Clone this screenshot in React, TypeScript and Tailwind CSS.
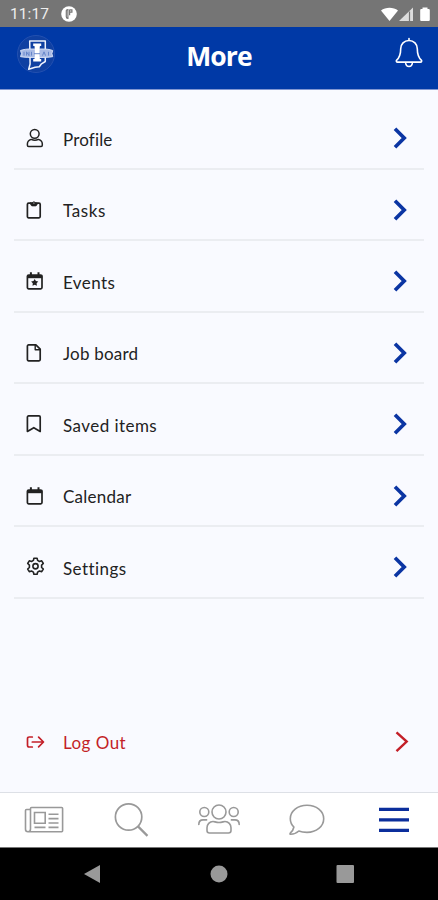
import React from 'react';

interface MenuItem {
  label: string;
  icon: React.ReactNode;
  textClass: string;
}

interface IconProps {
  children: React.ReactNode;
}

const MenuIcon: React.FC<IconProps> = ({ children }) => (
  <svg
    viewBox="0 0 20 20"
    className="w-5 h-5 shrink-0"
    fill="none"
    stroke="currentColor"
    strokeWidth={1.7}
    strokeLinejoin="round"
    strokeLinecap="round"
  >
    {children}
  </svg>
);

const ProfileIcon = () => (
  <MenuIcon>
    <circle cx="9.7" cy="5.8" r="4.4" strokeWidth={1.5} />
    <path d="M6.2 11.4C3.8 12.2 2.4 14 2.4 16v1.2c0 .8.4 1.2 1.2 1.2h12.5c.8 0 1.2-.4 1.2-1.2V16c0-2-1.4-3.8-3.8-4.6-2.2 1.1-5.1 1.1-7.3 0Z" strokeWidth={1.5} />
  </MenuIcon>
);

const TasksIcon = () => (
  <MenuIcon>
    <rect x="2.4" y="3.2" width="12.8" height="14.6" rx="1.2" />
    <path d="M5.500 3h1.800a1.700 1.700 0 0 1 3.200 0h1.800c0 1.700-.6 2.900-1.800 2.900H7.300c-1.200 0-1.800-1.200-1.800-2.900Z" fill="currentColor" strokeWidth={0.8} />
    <circle cx="8.9" cy="3" r=".6" fill="#f9faff" stroke="none" />
  </MenuIcon>
);

const CalendarIcon = ({ starred = false }: { starred?: boolean }) => (
  <MenuIcon>
    <rect x="2.4" y="4" width="14.6" height="13.8" rx="1.3" />
    <path d="M2.2 4h15v3.2h-15Z" fill="currentColor" stroke="none" />
    <path d="M5.900 1.200v3M13.500 1.200v3" strokeWidth={2} strokeLinecap="butt" />
    {starred && (
      <path d="m9.700 8.100 1.200 2 2.400.5-1.700 1.700.3 2.500-2.200-1-2.200 1 .3-2.500-1.700-1.700 2.400-.5Z" fill="currentColor" stroke="none" />
    )}
  </MenuIcon>
);

const FileIcon = () => (
  <MenuIcon>
    <path d="M3.600 1.900h7.300l4.300 4.300v10.400c0 .7-.5 1.200-1.200 1.200H3.600c-.7 0-1.200-.5-1.200-1.200V3.100c0-.7.500-1.200 1.200-1.200Z" />
    <path d="M10.200 2.200v4.600h4.700" strokeWidth={1.4} />
  </MenuIcon>
);

const BookmarkIcon = () => (
  <MenuIcon>
    <path d="M2.400 17.400V3.100c0-.7.500-1.200 1.200-1.200H14c.7 0 1.200.5 1.200 1.200v14.300l-6.400-3.700Z" />
  </MenuIcon>
);

const SettingsIcon = () => (
  <MenuIcon>
    <path d="M8.900 1.200h3.200l.5 2.200 1.900 1.100 2.200-.7 1.600 2.700-1.700 1.600v2.300l1.700 1.600-1.600 2.700-2.200-.7-1.900 1.100-.5 2.200H8.900l-.5-2.200L6.500 14l-2.200.7L2.700 12l1.700-1.600V8.100L2.700 6.500l1.600-2.700 2.200.7 1.900-1.100Z" strokeWidth={1.6} />
    <circle cx="10.5" cy="9.25" r="2.6" strokeWidth={1.6} />
  </MenuIcon>
);

const LogOutIcon = () => (
  <MenuIcon>
    <path d="M7.300 5H4.200c-1 0-1.700.7-1.700 1.700v6.600c0 1 .7 1.700 1.700 1.700h3.100" />
    <path d="M7.300 10h11M13.600 5.200l4.900 4.800-4.900 4.800" />
  </MenuIcon>
);

const menuItems: MenuItem[] = [
  { label: 'Profile', icon: <ProfileIcon />, textClass: 'tracking-[0.15px]' },
  { label: 'Tasks', icon: <TasksIcon />, textClass: 'tracking-[0.6px]' },
  { label: 'Events', icon: <CalendarIcon starred />, textClass: 'tracking-[0.4px]' },
  { label: 'Job board', icon: <FileIcon />, textClass: 'tracking-[0.2px]' },
  { label: 'Saved items', icon: <BookmarkIcon />, textClass: 'tracking-[0.45px]' },
  { label: 'Calendar', icon: <CalendarIcon />, textClass: 'tracking-[0.25px]' },
  { label: 'Settings', icon: <SettingsIcon />, textClass: 'tracking-[0.45px]' },
];

const StatusBar = () => (
  <div className="h-[27px] shrink-0 bg-[#757575] flex items-center pl-[10px] pr-[7px] text-white">
    <span className="font-[Roboto] text-[15.5px] leading-none tracking-[0.1px] text-[#eeeeee] mt-[2px]">11:17</span>
    <svg viewBox="0 0 16 16" className="w-4 h-4 ml-[12px] mt-[1px]">
      <circle cx="8" cy="8" r="7.8" fill="#fff" />
      <path d="M5.300 4.500v6.200c0 1 .7 1.600 1.600 1.600V3.600c-.9 0-1.600.3-1.600.9ZM8.600 3.600v5.600M8.800 3.900h2.100v2.300H8.800" fill="none" stroke="#757575" strokeWidth="1.2" />
    </svg>
    <svg viewBox="0 0 50 18" className="w-[50px] h-[18px] ml-auto mt-[2px]" fill="#fff">
      <path d="M0 4.500C4.500.9 12.500.9 17 4.500L8.500 15Z" />
      <path d="M18 15 32 1.500V15Z" fill="#ddd" />
      <path d="M28.500 5.500v9.500" stroke="#757575" strokeWidth="1.2" />
      <path d="M41.500 3V1.500h5V3h1c.8 0 1.300.5 1.300 1.300v9.400c0 .8-.5 1.300-1.300 1.300h-7c-.8 0-1.300-.5-1.300-1.300V4.300c0-.8.500-1.300 1.300-1.300Z" />
    </svg>
  </div>
);

const Logo = () => (
  <svg viewBox="0 0 40 40" className="w-10 h-10" fill="none">
    <circle cx="20" cy="20" r="18.5" fill="#0f40a2" stroke="#2350b0" strokeWidth="1" />
    <path d="M13.700 7h15.600v20.500l-3.800 2.300-2.200 3-4.200.5-6.400 2 1.400-5.300Z" stroke="#eef2fd" strokeWidth="1.5" strokeLinejoin="round" />
    <path d="M4.500 16.500c3-1.200 7.500-1.500 9.200-1.500h14c2 0 6 .3 9 1.500l-.8 3.100.8 3.100c-8 1.200-24.500 1.200-32.200 0l1-3.100Z" fill="#a9bbe5" stroke="#dde5f8" strokeWidth=".9" />
    <path d="M17.200 9.500h8v2.500h-1.300c-.6 4.500-.6 10 0 13h1.300v2.500h-8V25h1.300c.6-3 .6-8.500 0-13h-1.300Z" fill="#fff" />
    <path d="M8 17.800v3.800M10.500 21.600v-3.800l2.500 3.800v-3.800M15.500 17.800v3.800M26.500 21.600l1.500-3.800 1.500 3.800M32.500 17.800v3.800M18 19.700h6" stroke="#5f80c6" strokeWidth=".9" />
  </svg>
);

const Header = () => (
  <header className="h-[63px] shrink-0 bg-[#0039a6] border-b border-[#8297d2] grid grid-cols-3 items-center">
    <div className="pl-4 -mt-[9px]">
      <Logo />
    </div>
    <h1 className="text-center text-white font-bold text-[26.5px] leading-none tracking-[-0.9px] -mt-[3px] font-['Open_Sans',sans-serif]">More</h1>
    <svg viewBox="0 0 28 32" className="w-7 h-8 justify-self-end mr-[15px] -mt-[11px]" fill="none" stroke="#fff" strokeWidth="1.6" strokeLinecap="round" strokeLinejoin="round">
      <path d="M14 1.500v2M14 3.500c-4.800 0-8.300 3.500-8.300 8.300 0 6.200-1 8.700-4 11.300-.8.800-.3 2 .8 2h23c1.100 0 1.600-1.200.8-2-3-2.600-4-5.100-4-11.300 0-4.800-3.500-8.300-8.300-8.300Z" />
      <path d="M10.700 26.500c.3 2 1.500 3 3.300 3s3-1 3.300-3" />
    </svg>
  </header>
);

const MenuRow: React.FC<{ item: MenuItem }> = ({ item }) => (
  <li className="h-[71.5px] pt-[11px] pl-[11px] pr-[17px] border-b-2 border-[#ebedf1] flex items-center text-[#222]">
    {item.icon}
    <span className={`ml-[18px] mt-[3px] text-[17px] leading-6 ${item.textClass}`}>{item.label}</span>
    <svg viewBox="0 0 14 22" className="w-[14px] h-[22px] ml-auto" fill="none" stroke="#0b35a3" strokeWidth="3.7">
      <path d="m2 1.800 9.200 9.200L2 20.200" />
    </svg>
  </li>
);

const TabBar = () => (
  <nav className="h-[55px] pb-px shrink-0 bg-white border-t border-[#dde0e6] grid grid-cols-5 items-center justify-items-center text-[#999]">
    <svg viewBox="0 0 40 28" className="w-10 h-7" fill="none" stroke="currentColor" strokeWidth="1.6">
      <path d="M7.500 1.500h30.200c.5 0 .9.400.9.900v22.300c0 .6-.4 1-.9 1H4c-1.500 0-2.500-1-2.500-2.500V4.500c0-.6.400-1 1-1h4V23c0 1.500-1 2.700-2.500 2.700M6.500 3.500v-1c0-.6.400-1 1-1" />
      <path d="M10.500 6.500h10.700v10.700H10.500ZM24.500 8.200h10M24.500 12.600h10M24.500 17h10M10.500 21.400h11M24.500 21.400h10" />
    </svg>
    <svg viewBox="0 0 36 36" className="w-9 h-9" fill="none" stroke="currentColor" strokeWidth="1.7">
      <circle cx="15.6" cy="15" r="13.2" />
      <path d="m25 24.400 9.500 9.500" strokeWidth="2.200" />
    </svg>
    <svg viewBox="0 0 44 34" className="w-[44px] h-[34px]" fill="none" stroke="currentColor" strokeWidth="1.6" strokeLinecap="round" strokeLinejoin="round">
      <circle cx="22" cy="9" r="7" />
      <circle cx="7.3" cy="9" r="4.500" />
      <circle cx="36.700" cy="9" r="4.500" />
      <path d="M16 18.500c-3.400 0-6 2.800-6 6.300v2.700c0 1.500 1 2.500 2.500 2.500h19c1.500 0 2.500-1 2.500-2.500v-2.700c0-3.500-2.600-6.300-6-6.300-1.500 0-3 1-6 1s-4.500-1-6-1Z" />
      <path d="M1.800 21.500c0-2.800 1.800-4.600 4.300-4.600h3.500M42.200 21.500c0-2.800-1.800-4.600-4.300-4.600h-3.500" />
    </svg>
    <svg viewBox="0 0 38 34" className="w-[38px] h-[34px]" fill="none" stroke="currentColor" strokeWidth="1.6" strokeLinejoin="round">
      <path d="M19 2.200c-9.400 0-16.700 6-16.700 13.500 0 3.300 1.300 6.100 3.600 8.300-.4 2.300-1.800 4.500-3.700 6.200-.4.400-.2 1 .4 1 3 0 6-1.100 8.200-3.200 2.500 1 5.300 1.400 8.200 1.400 9.400 0 16.700-6 16.700-13.700S28.400 2.200 19 2.200Z" />
    </svg>
    <svg viewBox="0 0 30 26" className="w-[30px] h-[26px]" stroke="#0b2e9c" strokeWidth="3.2">
      <path d="M0 2.300h30M0 12.800h30M0 23.300h30" />
    </svg>
  </nav>
);

const AndroidNav = () => (
  <div className="h-[53px] shrink-0 bg-black border-t border-[#777] flex items-center">
    <svg viewBox="0 0 438 20" className="w-full h-5" fill="#999">
      <path d="m84 10 16-9v18Z" />
      <circle cx="219" cy="10" r="8.500" />
      <rect x="336.500" y="1" width="17.500" height="18" rx="1" />
    </svg>
  </div>
);

const App: React.FC = () => {
  return (
    <div className="w-[438px] h-[900px] flex flex-col overflow-hidden bg-[#f9faff] font-['Lato',sans-serif]">
      <StatusBar />
      <Header />
      <main className="flex-1 flex flex-col px-[14px] pt-[8px]">
        <ul>
          {menuItems.map(item => (
            <MenuRow key={item.label} item={item} />
          ))}
        </ul>
        <button type="button" className="mt-auto mb-[37px] pl-[11px] pr-[15px] flex items-center text-[#c31f28]">
          <LogOutIcon />
          <span className="ml-[18px] mt-[2px] text-[17px] leading-6 tracking-[0.45px]">Log Out</span>
          <svg viewBox="0 0 14 22" className="w-[14px] h-[22px] ml-auto" fill="none" stroke="currentColor" strokeWidth="2.4">
            <path d="m1.500 1.300 10.200 9.200-10.200 9.700" />
          </svg>
        </button>
      </main>
      <TabBar />
      <AndroidNav />
    </div>
  );
};

export default App;
